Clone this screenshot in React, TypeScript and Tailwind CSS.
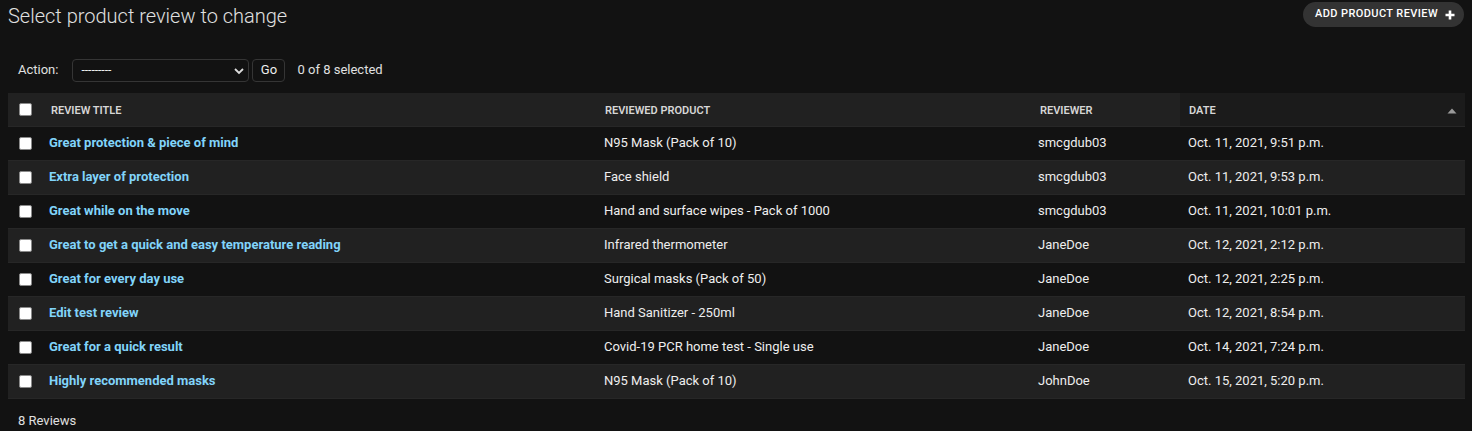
import React from 'react';

const rows = [
  { title: 'Great protection & piece of mind', product: 'N95 Mask (Pack of 10)', reviewer: 'smcgdub03', date: 'Oct. 11, 2021, 9:51 p.m.' },
  { title: 'Extra layer of protection', product: 'Face shield', reviewer: 'smcgdub03', date: 'Oct. 11, 2021, 9:53 p.m.' },
  { title: 'Great while on the move', product: 'Hand and surface wipes - Pack of 1000', reviewer: 'smcgdub03', date: 'Oct. 11, 2021, 10:01 p.m.' },
  { title: 'Great to get a quick and easy temperature reading', product: 'Infrared thermometer', reviewer: 'JaneDoe', date: 'Oct. 12, 2021, 2:12 p.m.' },
  { title: 'Great for every day use', product: 'Surgical masks (Pack of 50)', reviewer: 'JaneDoe', date: 'Oct. 12, 2021, 2:25 p.m.' },
  { title: 'Edit test review', product: 'Hand Sanitizer - 250ml', reviewer: 'JaneDoe', date: 'Oct. 12, 2021, 8:54 p.m.' },
  { title: 'Great for a quick result', product: 'Covid-19 PCR home test - Single use', reviewer: 'JaneDoe', date: 'Oct. 14, 2021, 7:24 p.m.' },
  { title: 'Highly recommended masks', product: 'N95 Mask (Pack of 10)', reviewer: 'JohnDoe', date: 'Oct. 15, 2021, 5:20 p.m.' },
];

const Checkbox = () => (
  <span className="block w-[13px] h-[13px] rounded-[2px] bg-white border border-[#8a8a8a]" />
);

export default function App() {
  return (
    <div className="min-h-screen bg-[#121212] text-[#eeeeee] font-['Roboto',sans-serif] text-[13px]">
      {/* header */}
      <div className="flex items-start justify-between pl-2 pr-2">
        <h1 className="pt-[4px] text-[20px] leading-6 font-light text-[#e0e0e0]">
          Select product review to change
        </h1>
        <a className="mt-[2px] flex items-center gap-[7px] h-[25px] pl-3 pr-[9px] rounded-full bg-[#333333] text-white text-[11px] font-medium tracking-[0.4px] uppercase">
          Add product review
          <svg width="10" height="10" viewBox="0 0 10 10">
            <path d="M5 0.5v9M0.5 5h9" stroke="white" strokeWidth="2.6" />
          </svg>
        </a>
      </div>

      {/* actions */}
      <div className="mt-[30px] pl-[18px] flex items-center h-[24px]">
        <span className="text-[#e0e0e0] mr-[14px]">Action:</span>
        <div className="relative w-[177px] h-[23px] rounded-[4px] border border-[#353535] flex items-center pl-2">
          <span className="text-[#eeeeee] text-[12px] leading-none">---------</span>
          <svg className="absolute right-[4px] top-[7px]" width="10" height="8" viewBox="0 0 10 8">
            <path d="M1 2l4 4 4-4" stroke="#dddddd" strokeWidth="1.8" fill="none" />
          </svg>
        </div>
        <div className="ml-[3px] w-[33px] h-[23px] rounded-[4px] border border-[#353535] flex items-center justify-center text-[#eeeeee]">
          Go
        </div>
        <span className="ml-[12px] text-[#e0e0e0]">0 of 8 selected</span>
      </div>

      {/* table */}
      <div className="mt-[11px] mx-2">
        <table className="w-[1457px] border-collapse table-fixed">
          <colgroup>
            <col className="w-[33px]" />
            <col className="w-[555px]" />
            <col className="w-[434px]" />
            <col className="w-[150px]" />
            <col className="w-[285px]" />
          </colgroup>
          <thead>
            <tr className="h-[33px] bg-[#212121] border-b border-[#272727] text-left">
              <th className="pl-[11px] pr-0 align-middle">
                <Checkbox />
              </th>
              <th className="pl-[10px] pr-2 pt-[3px] text-[11px] font-semibold uppercase text-[#d6d6d6]">Review title</th>
              <th className="pl-[9px] pr-2 pt-[3px] text-[11px] font-semibold uppercase text-[#d6d6d6]">Reviewed product</th>
              <th className="pl-[10px] pr-2 pt-[3px] text-[11px] font-semibold uppercase text-[#d6d6d6]">Reviewer</th>
              <th className="pl-[9px] pr-2 pt-[3px] text-[11px] font-semibold uppercase text-[#d6d6d6] bg-[#1b1b1b]">
                <div className="flex items-center justify-between">
                  <span>Date</span>
                  <svg width="10" height="6" viewBox="0 0 10 6">
                    <path d="M5 0.5L9.5 5.5H0.5z" fill="#9a9a9a" />
                  </svg>
                </div>
              </th>
            </tr>
          </thead>
          <tbody>
            {rows.map((r, i) => (
              <tr
                key={i}
                className={`h-[34px] border-b border-[#272727] ${i % 2 === 1 ? 'bg-[#212121]' : 'bg-[#121212]'}`}
              >
                <td className="pl-[11px] align-middle">
                  <Checkbox />
                </td>
                <td className="px-2 font-bold text-[#81d4fa]">{r.title}</td>
                <td className="px-2 text-[#eeeeee]">{r.product}</td>
                <td className="px-2 text-[#eeeeee]">{r.reviewer}</td>
                <td className="px-2 text-[#eeeeee]">{r.date}</td>
              </tr>
            ))}
          </tbody>
        </table>
      </div>

      <p className="pl-[18px] pt-[12px] text-[#e0e0e0]">8 Reviews</p>
    </div>
  );
}
